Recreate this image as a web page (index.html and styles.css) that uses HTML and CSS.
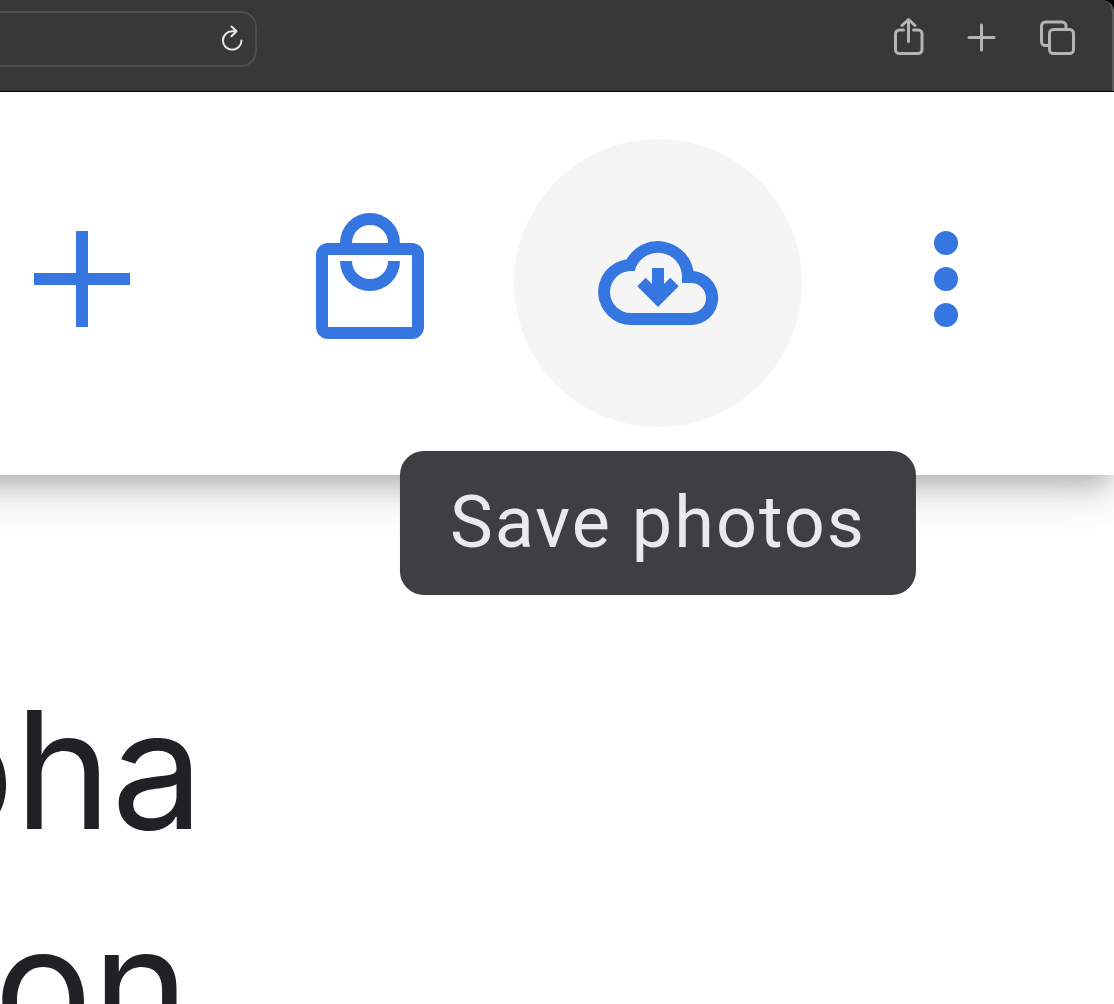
FILE: index.html
```html
<!DOCTYPE html>
<html lang="en">
<head>
<meta charset="utf-8">
<meta name="viewport" content="width=device-width, initial-scale=1">
<title>Save photos</title>
<link rel="stylesheet" href="styles.css">
</head>
<body>
<div class="browser">
  <div class="browser-bar">
    <form class="address">
      <input class="address-input" type="text" aria-label="Address">
      <button class="tool" type="button" aria-label="Reload">
        <svg class="tool-icon light" viewBox="0 0 40 40"><path d="M29.500 21.500a9.300 9.300 0 1 1-9.300-9.300h4M19.500 7.500l5 4.800-5 5"/></svg>
      </button>
    </form>
    <div class="tools">
      <button class="tool" type="button" aria-label="Share">
        <svg class="tool-icon" viewBox="0 0 40 40"><path d="M15.500 13h-4a4 4 0 0 0-4 4v15.500a4 4 0 0 0 4 4h18.500a4 4 0 0 0 4-4v-15.500a4 4 0 0 0-4-4h-4.500M20.500 24.500v-22M14 8.500l6.500-6 6.500 6"/></svg>
      </button>
      <button class="tool" type="button" aria-label="New tab">
        <svg class="tool-icon" viewBox="0 0 40 40"><path d="M7 20.500h25M19.500 8v25"/></svg>
      </button>
      <button class="tool" type="button" aria-label="Show tabs">
        <svg class="tool-icon" viewBox="0 0 40 40"><rect x="13.500" y="12.500" width="24" height="24" rx="4"/><path d="M13.500 28.500h-4a4 4 0 0 1-4-4v-15.500a4 4 0 0 1 4-4h16.500a4 4 0 0 1 4 4v3.500"/></svg>
      </button>
    </div>
  </div>
</div>
<header class="app-bar">
  <button class="action" type="button" aria-label="Add">
    <svg class="action-icon" viewBox="0 0 144 144"><path d="M66 20h12v42h42v12H78v42H66V74H24V62h42z"/></svg>
  </button>
  <button class="action" type="button" aria-label="Shop">
    <svg class="action-icon" viewBox="0 0 144 144"><path fill-rule="evenodd" d="M30 32h84a12 12 0 0 1 12 12v72a12 12 0 0 1-12 12H30a12 12 0 0 1-12-12V44a12 12 0 0 1 12-12zM30 44v72h84V44z"/><path d="M42 34v-2a30 30 0 0 1 60 0v2H90v-2a18 18 0 0 0-36 0v2zM42 50h12a18 18 0 0 0 36 0h12a30 30 0 0 1-60 0z"/></svg>
  </button>
  <div class="action-wrap">
    <button class="action active" type="button" aria-describedby="save-tip" aria-label="Save photos">
      <svg class="action-icon" viewBox="0 0 144 144"><path fill-rule="evenodd" d="M45 114A33 33 0 0 1 40.700 48.300A36 36 0 0 1 107.500 60.100A27 27 0 0 1 105 114zM45 102H105A15 15 0 0 0 105 72H96V66A24 24 0 0 0 48.700 60H45A21 21 0 0 0 45 102z"/><path d="M66 57h12v16l6.300-6.300 8.400 8.600L72 96 51.300 75.300l8.400-8.600L66 73z"/></svg>
    </button>
    <div class="tooltip" id="save-tip" role="tooltip">Save photos</div>
  </div>
  <button class="action" type="button" aria-label="More options">
    <svg class="action-icon" viewBox="0 0 144 144"><circle cx="72" cy="32" r="12"/><circle cx="72" cy="68" r="12"/><circle cx="72" cy="104" r="12"/></svg>
  </button>
</header>
<main class="content">
  <h1 class="title"><span class="line line-first">pha</span><span class="line">on</span></h1>
</main>
</body>
</html>
```
FILE: styles.css
```css
* {
  box-sizing: border-box;
}

body {
  display: flex;
  flex-direction: column;
  height: 100vh;
  margin: 0;
  overflow: hidden;
  background: #fefefe;
  font-family: Roboto, sans-serif;
}

button {
  padding: 0;
  border: 0;
  background: none;
}

.browser {
  position: relative;
  z-index: 2;
  flex: none;
  border-bottom: 1px solid #000;
  background: #000;
}

.browser-bar {
  display: flex;
  justify-content: space-between;
  align-items: flex-start;
  height: 91px;
  padding: 11px 36px 0 0;
  border-right: 2px solid #5c5c5c;
  border-top-right-radius: 12px;
  background: #383838;
}

.address {
  display: flex;
  align-items: center;
  width: 257px;
  height: 56px;
  padding-right: 3px;
  border: 2px solid #4f4f4f;
  border-left: 0;
  border-radius: 0 16px 16px 0;
}

.address-input {
  flex: 1;
  min-width: 0;
  height: 40px;
  border: 0;
  outline: 0;
  background: none;
  color: #e4e4e4;
}

.tools {
  display: flex;
  gap: 34px;
  padding-top: 6px;
}

.tool {
  width: 40px;
  height: 40px;
}

.tool-icon {
  display: block;
  width: 40px;
  height: 40px;
  fill: none;
  stroke: #b4b4b4;
  stroke-width: 3;
  stroke-linecap: round;
  stroke-linejoin: round;
}

.light {
  stroke: #e8e8e8;
  stroke-width: 2;
}

/* The bar runs on past the left edge of the window. */
.app-bar {
  position: relative;
  z-index: 1;
  display: flex;
  flex: none;
  justify-content: flex-end;
  margin-left: -62px;
  padding: 47px 24px 48px 0;
  background: #fefefe;
  box-shadow: 0 24px 30px rgba(0, 0, 0, 0.08), 0 6px 60px rgba(0, 0, 0, 0.08), 0 12px 24px -6px rgba(0, 0, 0, 0.22);
}

.action-wrap {
  position: relative;
  flex: none;
}

.action {
  display: flex;
  flex: none;
  justify-content: center;
  align-items: center;
  width: 288px;
  height: 288px;
  border-radius: 50%;
}

.active {
  background: #f5f5f5;
}

.action-icon {
  width: 144px;
  height: 144px;
  fill: #3576e0;
}

.tooltip {
  position: absolute;
  top: 100%;
  left: 50%;
  margin-top: 24px;
  padding: 24px 50px;
  border-radius: 24px;
  background: #3c4043;
  color: #e8eaed;
  font-size: 72px;
  line-height: 96px;
  letter-spacing: 2px;
  white-space: nowrap;
  transform: translateX(-50%);
}

.content {
  flex: 1;
  min-height: 0;
  padding-top: 187px;
  overflow: hidden;
}

.title {
  margin: 0 0 0 -6px;
  color: #202124;
  font-family: Inter, sans-serif;
  font-size: 164px;
  font-weight: 400;
  line-height: 216px;
}

.line {
  display: block;
}

.line-first {
  margin-left: -80px;
}
```
